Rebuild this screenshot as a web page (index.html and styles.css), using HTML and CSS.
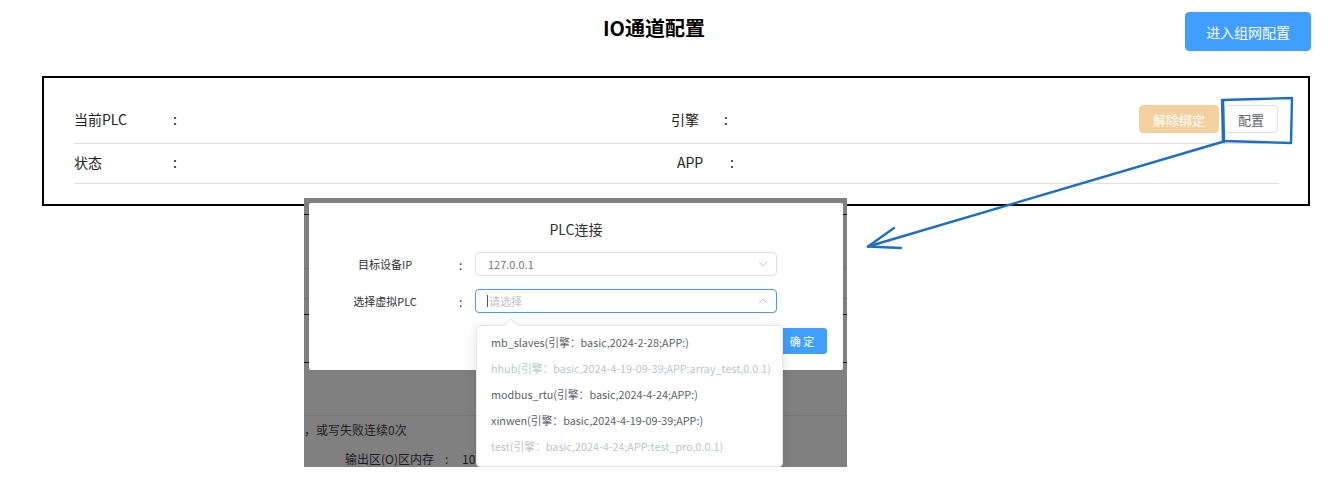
FILE: index.html
```html
<!DOCTYPE html>
<html lang="zh-CN">
<head>
<meta charset="utf-8">
<title>IO通道配置</title>
<link rel="stylesheet" href="styles.css">
</head>
<body>
<header class="header">
  <h1 class="title">IO通道配置</h1>
  <button class="btn btn-primary btn-enter">进入组网配置</button>
</header>

<section class="info-box">
  <div class="info-row row-first">
    <div class="cell cell-left-1">
      <span class="label label-left">当前PLC</span><span class="colon">:</span>
    </div>
    <div class="cell">
      <span class="label label-right">引擎</span><span class="colon">:</span>
    </div>
    <div class="actions">
      <button class="btn btn-warning-disabled">解除绑定</button>
      <button class="btn btn-default">配置</button>
    </div>
  </div>
  <div class="info-row row-second">
    <div class="cell cell-left-2">
      <span class="label label-left">状态</span><span class="colon">:</span>
    </div>
    <div class="cell">
      <span class="label label-right">APP</span><span class="colon">:</span>
    </div>
  </div>
</section>

<div class="shot">
  <div class="dim-page">
    <div class="dl dl-1"></div>
    <div class="dl dl-2"></div>
    <div class="dl dl-3"></div>
    <div class="dl dl-4"></div>
    <div class="dl dl-5"></div>
    <div class="dl dl-6"></div>
    <div class="dim-text dim-text-1">，或写失败连续0次</div>
    <div class="dim-text dim-text-2"><span class="dim-lbl">输出区(O)区内存</span><span class="dim-colon">:</span><span>10</span></div>
  </div>

  <div class="dialog">
    <div class="dialog-title">PLC连接</div>
    <div class="form-row">
      <span class="form-label">目标设备IP</span>
      <span class="form-colon">:</span>
      <div class="input">
        <span class="input-value">127.0.0.1</span>
        <svg class="chev" width="10" height="6" viewBox="0 0 10 6"><polyline points="1,1 5,5 9,1" fill="none" stroke="#c0c4cc" stroke-width="1"/></svg>
      </div>
    </div>
    <div class="form-row form-row-2">
      <span class="form-label">选择虚拟PLC</span>
      <span class="form-colon">:</span>
      <div class="input input-focus">
        <span class="caret"></span><span class="input-ph">请选择</span>
        <svg class="chev" width="10" height="6" viewBox="0 0 10 6"><polyline points="1,5 5,1 9,5" fill="none" stroke="#c0c4cc" stroke-width="1"/></svg>
      </div>
    </div>
    <div class="dialog-footer">
      <button class="btn-ok">确 定</button>
    </div>
  </div>

  <div class="popper">
    <span class="popper-arrow"></span>
    <ul class="options">
      <li class="opt">mb_slaves(引擎：basic,2024-2-28;APP:)</li>
      <li class="opt opt-disabled">hhub(引擎：basic,2024-4-19-09-39;APP:array_test,0.0.1)</li>
      <li class="opt">modbus_rtu(引擎：basic,2024-4-24;APP:)</li>
      <li class="opt">xinwen(引擎：basic,2024-4-19-09-39;APP:)</li>
      <li class="opt opt-disabled">test(引擎：basic,2024-4-24;APP:test_pro,0.0.1)</li>
    </ul>
  </div>
</div>

<svg class="annot" width="1343" height="477" viewBox="0 0 1343 477">
  <g fill="none" stroke="#1e6fc4" stroke-width="2.4" stroke-linecap="round" stroke-linejoin="round">
    <path d="M1222 100 L1258 99 L1292 98 L1291.5 120 L1291 143 L1258 142 L1223 141 L1222.5 120 Z"/>
    <path d="M1223 101 L1224 142"/>
    <path d="M1222 142 L868 246.5"/>
    <path d="M868 246.5 L894 228"/>
    <path d="M868 246.5 L901 248"/>
  </g>
</svg>
</body>
</html>
```

FILE: styles.css
```css
* { box-sizing: border-box; }

body {
  margin: 0;
  font-family: "Noto Sans CJK SC", "Noto Sans", sans-serif;
  color: #303133;
  background: #fff;
  width: 1343px;
  height: 477px;
  overflow: hidden;
  position: relative;
}

.header {
  display: flex;
  align-items: flex-start;
  padding-top: 12px;
  height: 76px;
}

.title {
  margin: 2px 0 0 603px;
  font-size: 20px;
  line-height: 28px;
  font-weight: 700;
  color: #000;
}

.btn {
  font-family: inherit;
  border-radius: 4px;
  cursor: pointer;
}

.btn-primary {
  background: #409eff;
  border: 1px solid #409eff;
  color: #fff;
}

.btn-enter {
  margin-left: auto;
  margin-right: 32px;
  height: 39px;
  padding: 0 20px;
  font-size: 14px;
}

.info-box {
  margin: 0 33px 0 42px;
  height: 130px;
  border: 2px solid #000;
  padding: 20px 29px 0 30px;
}

.info-row {
  display: flex;
  align-items: center;
  border-bottom: 1px solid #dcdfe6;
  font-size: 14px;
  color: #222;
}

.row-first { height: 46px; padding-bottom: 3px; }
.row-second { height: 40px; padding-bottom: 4px; }

.cell { display: flex; align-items: center; }
.cell-left-1 { width: 597px; }
.cell-left-2 { width: 603px; }

.label-left { width: 99px; }
.label-right { width: 53px; }
.colon { font-size: 14px; }

.actions {
  margin-left: auto;
  margin-right: 1px;
  display: flex;
  gap: 5px;
}

.actions .btn {
  height: 28px;
  padding: 0 13px;
  font-size: 13px;
}

.btn-warning-disabled {
  background: #f3d19e;
  border: 1px solid #f3d19e;
  color: #fff;
}

.btn-default {
  background: #fff;
  border: 1px solid #dcdfe6;
  color: #606266;
}

/* embedded screenshot */
.shot {
  position: absolute;
  left: 304px;
  top: 198px;
  width: 543px;
  height: 269px;
  background: #808080;
  overflow: hidden;
}

.dim-page { display: flex; flex-direction: column; }

.dl { border-bottom: 1px solid #6f7073; }
.dl-1 { height: 17px; border-bottom-color: #111; }
.dl-2 { height: 54px; }
.dl-3 { height: 30px; }
.dl-4 { height: 16px; border-bottom-color: #111; }
.dl-5 { height: 48px; border-bottom-color: #111; }
.dl-6 { height: 53px; border-bottom-color: #767676; }

.dim-text {
  font-size: 12px;
  color: #1c1c1c;
  white-space: nowrap;
}
.dim-text-1 { line-height: 28px; }
.dim-text-2 {
  line-height: 30px;
  padding-left: 41px;
  display: flex;
}
.dim-lbl { width: 100px; }
.dim-colon { width: 17px; }

.dialog {
  position: absolute;
  left: 5px;
  top: 5px;
  width: 534px;
  height: 167px;
  background: #fff;
  border-radius: 2px;
  padding-top: 15px;
}

.dialog-title {
  text-align: center;
  font-size: 14px;
  line-height: 22px;
  color: #303133;
}

.form-row {
  display: flex;
  align-items: center;
  margin-top: 12px;
  padding-left: 26px;
  font-size: 11px;
  color: #303133;
}
.form-row-2 { margin-top: 13px; }

.form-label { width: 100px; text-align: center; }
.form-colon { width: 40px; padding-left: 24px; font-size: 12px; }

.input {
  width: 302px;
  height: 24px;
  border: 1px solid #dcdfe6;
  border-radius: 4px;
  display: flex;
  align-items: center;
  padding: 0 8px 0 12px;
  font-size: 11px;
}
.input-focus { border-color: #409eff; padding-left: 11px; }

.input-value { color: #777; }
.caret {
  width: 1px;
  height: 12px;
  background: #555;
  margin-right: 1px;
}
.input-ph { color: #c0c4cc; }
.chev { margin-left: auto; }

.dialog-footer {
  display: flex;
  justify-content: flex-end;
  padding-right: 16px;
  margin-top: 15px;
}

.btn-ok {
  width: 50px;
  height: 26px;
  background: #409eff;
  border: 1px solid #409eff;
  border-radius: 3px;
  color: #fff;
  font-family: inherit;
  font-size: 11px;
  padding: 0;
}

.popper {
  position: absolute;
  left: 172px;
  top: 127px;
  width: 307px;
  height: 142px;
  background: #fff;
  border: 1px solid #e4e7ed;
  border-radius: 4px;
  box-shadow: 0 2px 12px rgba(0, 0, 0, 0.12);
}

.popper-arrow {
  position: absolute;
  left: 29px;
  top: -6px;
  width: 10px;
  height: 10px;
  background: #fff;
  border-left: 1px solid #e4e7ed;
  border-top: 1px solid #e4e7ed;
  transform: rotate(45deg);
}

.options {
  list-style: none;
  margin: 0;
  padding: 3px 0 6px;
  position: relative;
}

.opt {
  line-height: 26px;
  padding-left: 14px;
  font-size: 10.8px;
  color: #606266;
  white-space: nowrap;
}
.opt-disabled { color: #c0c4cc; }

.annot {
  position: absolute;
  left: 0;
  top: 0;
  pointer-events: none;
}
```
